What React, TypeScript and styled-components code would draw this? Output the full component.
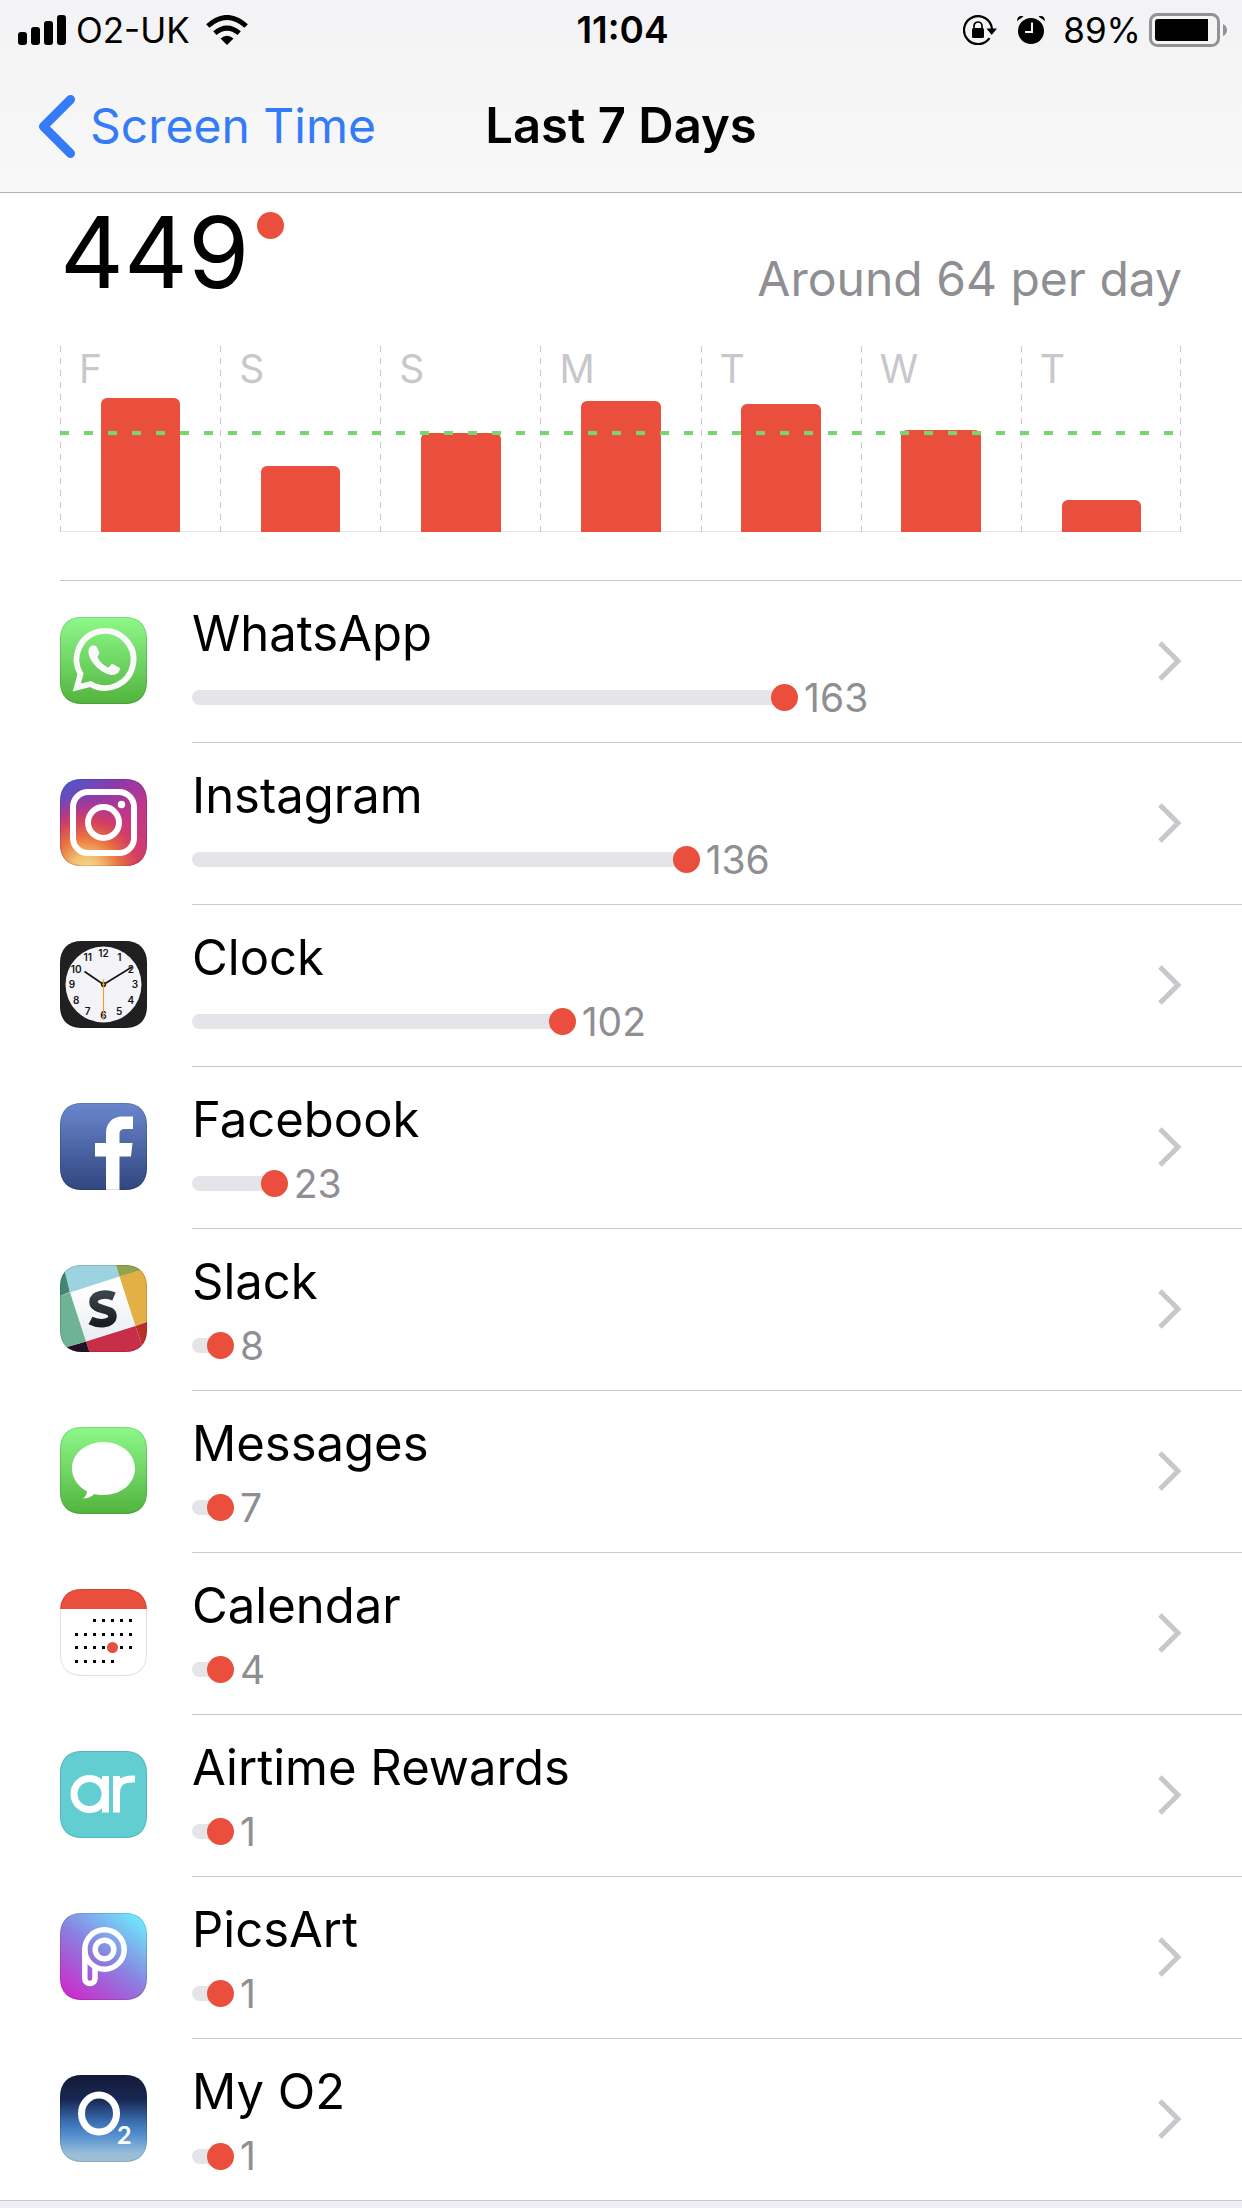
import React from "react";
import styled, { createGlobalStyle } from "styled-components";

const Global = createGlobalStyle`
  * { box-sizing: border-box; }
  body { margin: 0; background: #efeff4; font-family: Inter, "Liberation Sans", sans-serif; color: #000; }
`;

const red = "#ea4f3d";
const hairline = "#c8c7cc";
const blue = "#347bf7";

const Page = styled.div`
  background: #fff;
  border-bottom: 1px solid ${hairline};
`;

const Header = styled.header`
  background: linear-gradient(#f3f3f5, #f8f8f8);
  border-bottom: 1px solid #b2b2b2;
`;

const ThreeColumns = styled.div`
  display: grid;
  grid-template-columns: 1fr auto 1fr;
  align-items: center;
`;

const StatusBar = styled(ThreeColumns)`
  height: 60px;
  padding: 0 15px 0 18px;
  font-size: 35px;
  line-height: 36px;
`;

const StatusLeft = styled.div`
  display: flex;
  align-items: center;
  gap: 10px;
`;

const Carrier = styled.span`
  padding-right: 6px;
`;

const StatusRight = styled(StatusLeft)`
  justify-content: flex-end;
  gap: 8px;
`;

const StatusIcons = styled.div`
  display: flex;
  gap: 20px;
  padding-right: 10px;
`;

const Clock = styled.time`
  font-size: 37px;
  font-weight: 600;
`;

const NavBar = styled(ThreeColumns)`
  height: 132px;
  padding: 0 38px;
`;

const BackLink = styled.a`
  display: flex;
  align-items: center;
  gap: 14px;
  color: ${blue};
  font-size: 48px;
  line-height: 60px;
  text-decoration: none;
`;

const Title = styled.h1`
  margin: 0;
  font-size: 49px;
  line-height: 60px;
  font-weight: 600;
`;

const Summary = styled.section`
  padding: 8px 60px 0;
`;

const Totals = styled.div`
  display: flex;
  justify-content: space-between;
  align-items: flex-start;
`;

const Total = styled.div`
  display: flex;
  align-items: flex-start;
  gap: 8px;
  font-size: 99px;
  line-height: 102px;
`;

const Dot = styled.span`
  flex: none;
  width: 27px;
  height: 27px;
  border-radius: 50%;
  background: ${red};
`;

const TotalDot = styled(Dot)`
  margin-top: 11px;
`;

const Average = styled.p`
  margin: 48px 0 0;
  color: #8e8e93;
  font-size: 48px;
  line-height: 60px;
`;

const Chart = styled.div`
  position: relative;
  display: grid;
  grid-template-columns: repeat(7, 1fr);
  height: 186px;
  margin-top: 37px;
  padding-right: 1px;
  border-bottom: 1px solid #e5e5ea;
`;

const dashes = `repeating-linear-gradient(#c7c7cc 0 6px, transparent 6px 12px)`;

const Day = styled.div`
  display: flex;
  flex-direction: column;
  justify-content: space-between;
  height: 186px;
  padding-left: 1px;
  background: ${dashes} left / 1px 100% no-repeat;

  &:last-of-type {
    background: ${dashes} left / 1px 100% no-repeat, ${dashes} right / 1px 100% no-repeat;
  }
`;

const DayLabel = styled.span`
  height: 0;
  padding-left: 18px;
  color: #c7c7cc;
  font-size: 39px;
  line-height: 46px;
`;

const Bar = styled.div`
  width: 50%;
  margin: 0 auto;
  border-radius: 6px 6px 0 0;
  background: ${red};
`;

const AverageLine = styled.span`
  position: absolute;
  left: 0;
  right: 0;
  top: 85px;
  height: 4px;
  background: repeating-linear-gradient(90deg, #76d672 0 9px, transparent 9px 24px);
`;

const List = styled.ul`
  list-style: none;
  margin: 48px 0 -1px 60px;
  padding: 0;
  border-top: 1px solid ${hairline};
`;

const Row = styled.li`
  &:not(:last-child) > a > div {
    border-bottom: 1px solid ${hairline};
  }
`;

const RowLink = styled.a`
  display: flex;
  align-items: center;
  gap: 45px;
  color: inherit;
  text-decoration: none;

  > svg {
    margin-bottom: 3px;
  }
`;

const RowBody = styled.div`
  flex: 1;
  display: flex;
  align-items: center;
  gap: 20px;
  height: 162px;
  padding: 0 60px 2px 0;
`;

const Details = styled.div`
  flex: 1;
  min-width: 0;
  padding-top: 3px;
`;

const AppName = styled.div`
  font-size: 49px;
  line-height: 60px;
`;

const Usage = styled.div`
  display: flex;
  align-items: center;
  gap: 6px;
  margin-top: 11px;
  color: #8e8e93;
  font-size: 39px;
  line-height: 46px;
`;

const Track = styled.div`
  flex: none;
  display: flex;
  align-items: center;
  min-width: 42px;
`;

const Rail = styled.span`
  flex: 1;
  height: 15px;
  margin-right: -13px;
  border-radius: 8px 0 0 8px;
  background: #e4e4e9;
`;

const IconSvg = styled.svg`
  flex: none;
  display: block;
`;

function Tile({ id, fill, children }: { id: string; fill: string; children: React.ReactNode }) {
  return (
    <IconSvg width="87" height="87" viewBox="0 0 87 87" aria-hidden="true">
      <defs>
        <clipPath id={`${id}-clip`}>
          <path d="M22 0H65C79 0 87 8 87 22V65C87 79 79 87 65 87H22C8 87 0 79 0 65V22C0 8 8 0 22 0Z" />
        </clipPath>
      </defs>
      <g clipPath={`url(#${id}-clip)`}>
        <rect width="87" height="87" fill={fill} />
        {children}
        <path
          d="M22 0H65C79 0 87 8 87 22V65C87 79 79 87 65 87H22C8 87 0 79 0 65V22C0 8 8 0 22 0Z"
          fill="none"
          stroke="#000"
          strokeOpacity="0.12"
          strokeWidth="2"
        />
      </g>
    </IconSvg>
  );
}

const greenStops = (
  <>
    <stop offset="0" stopColor="#8ef88a" />
    <stop offset="1" stopColor="#52b43e" />
  </>
);

const WhatsAppIcon = () => (
  <Tile id="wa" fill="url(#wa-g)">
    <linearGradient id="wa-g" x2="0" y2="1">{greenStops}</linearGradient>
    <path d="M16.800 70.500L20.500 57A28.500 28.500 0 1 1 30.500 67Z" fill="none" stroke="#fafafa" strokeWidth="5.800" />
    <path
      d="M33 28.500C30 28 28 32 28.500 36C30 46 42 57 52 58C57 58 60 55 60 51L52 46.500L48.500 50.500C44 49 39 44 37.500 40L39.500 36L36.500 29.500C36 28.500 34 28.500 33 28.500Z"
      fill="#fafafa"
    />
  </Tile>
);

const InstagramIcon = () => (
  <Tile id="ig" fill="url(#ig-a)">
    <linearGradient id="ig-a" x1="0.100" y1="0" x2="0.700" y2="1">
      <stop offset="0" stopColor="#4a58cf" />
      <stop offset="0.300" stopColor="#8f3aa8" />
      <stop offset="0.600" stopColor="#c0378a" />
      <stop offset="1" stopColor="#cf3d70" />
    </linearGradient>
    <radialGradient id="ig-b" cx="0.300" cy="1.050" r="0.850">
      <stop offset="0" stopColor="#f8dc8a" />
      <stop offset="0.200" stopColor="#f3c070" />
      <stop offset="0.450" stopColor="#e9743f" />
      <stop offset="0.700" stopColor="#d63f5c" stopOpacity="0.850" />
      <stop offset="1" stopColor="#c0378a" stopOpacity="0" />
    </radialGradient>
    <rect width="87" height="87" fill="url(#ig-b)" />
    <rect x="13" y="13" width="61" height="61" rx="15" fill="none" stroke="#fff" strokeWidth="6" />
    <circle cx="43.500" cy="43.500" r="15.500" fill="none" stroke="#fff" strokeWidth="6" />
    <circle cx="61.500" cy="25.500" r="3.700" fill="#fff" />
  </Tile>
);

const ClockIcon = () => (
  <Tile id="ck" fill="#202020">
    <circle cx="43.500" cy="43.500" r="38" fill="#f4f4f8" />
    <g fontSize="10" fontWeight="600" textAnchor="middle" fill="#151515">
      {Array.from({ length: 12 }, (_, i) => {
        const angle = ((i + 1) * Math.PI) / 6;
        return (
          <text key={i} x={43.5 + 31.5 * Math.sin(angle)} y={47 - 31 * Math.cos(angle)}>
            {i + 1}
          </text>
        );
      })}
    </g>
    <path d="M24.500 30.500L43.500 43.500L72 26" fill="none" stroke="#151515" strokeWidth="1.700" />
    <circle cx="43.500" cy="43.500" r="2.600" fill="#151515" />
    <path d="M43.500 38.500V79" stroke="#f09a2e" strokeWidth="1.100" />
    <circle cx="43.500" cy="43.500" r="1.300" fill="#f09a2e" />
  </Tile>
);

const FacebookIcon = () => (
  <Tile id="fb" fill="url(#fb-g)">
    <linearGradient id="fb-g" x2="0" y2="1">
      <stop offset="0" stopColor="#6a86cd" />
      <stop offset="1" stopColor="#30467f" />
    </linearGradient>
    <path d="M46 87V53.500H35V40H46V30C46 20 53 13.500 62 13.500H73V26H65C61 26 59.500 28 59.500 31V40H72.500L71 53.500H59.500V87Z" fill="#fff" />
  </Tile>
);

const SlackIcon = () => (
  <Tile id="sl" fill="#fff">
    <linearGradient id="sl-g" x2="0" y2="1">
      <stop offset="0.200" stopColor="#fff" />
      <stop offset="1" stopColor="#e8edf2" />
    </linearGradient>
    <linearGradient id="sl-s" x2="0" y2="1">
      <stop offset="0" stopColor="#3c424b" />
      <stop offset="1" stopColor="#1b1f24" />
    </linearGradient>
    <path d="M10 27L59 11L76 60L26 76Z" fill="url(#sl-g)" />
    <path d="M0 0H4L10 27L0 31Z" fill="#438770" />
    <path d="M3 0H56L59.500 11.500L10 27.500Z" fill="#9dd2df" />
    <path d="M56 0H87V4L59.500 11.500Z" fill="#93a24f" />
    <path d="M59.500 11.500L87 3V57L75.500 61Z" fill="#e3b046" />
    <path d="M75.500 61L87 57V87H84Z" fill="#b73029" />
    <path d="M26 76.500L75.500 61L84 87H29.500Z" fill="#c72f49" />
    <path d="M0 84L26 76.500L29.500 87H0Z" fill="#241126" />
    <path d="M0 31L10 27.500L26 76.500L0 84Z" fill="#6eb394" />
    <path
      d="M54 31.500C47 28.500 33.500 28.500 33.500 37C33.500 46 52.500 42.500 52.500 51C52.500 59.500 38 59.500 30.500 55.500"
      fill="none"
      stroke="url(#sl-s)"
      strokeWidth="8.500"
      strokeLinejoin="round"
    />
  </Tile>
);

const MessagesIcon = () => (
  <Tile id="ms" fill="url(#ms-g)">
    <linearGradient id="ms-g" x2="0" y2="1">{greenStops}</linearGradient>
    <path
      d="M43.500 15C61 15 75 26.500 75 41.500C75 56.500 61 68 43.500 68C40 68 37 67.600 34.500 67C31 70 27 71.500 23 71.500C25.500 69.500 27 67 27 64.500C18 59.500 12 51 12 41.500C12 26.500 26 15 43.500 15Z"
      fill="#fff"
    />
  </Tile>
);

const calendarWeeks = [
  { y: 30, from: 2, to: 6 },
  { y: 44, from: 0, to: 6 },
  { y: 57, from: 0, to: 6 },
  { y: 71, from: 0, to: 4 },
];

const CalendarIcon = () => (
  <Tile id="cl" fill="#fff">
    <rect width="87" height="20" fill={red} />
    {calendarWeeks.map(({ y, from, to }) =>
      Array.from({ length: to - from + 1 }, (_, i) => (
        <rect key={`${y}-${i}`} x={15 + (from + i) * 9} y={y} width="3" height="3" />
      )),
    )}
    <circle cx="52.500" cy="58.500" r="5.500" fill={red} />
  </Tile>
);

const AirtimeIcon = () => (
  <Tile id="ar" fill="#63ced1">
    <g fill="none" stroke="#fff" strokeWidth="7">
      <circle cx="29.500" cy="43" r="15.500" />
      <path d="M45.500 25V61.500M56.500 25V61.500M56.500 42C56.500 32 62 27.500 75 28" />
    </g>
  </Tile>
);

const PicsArtIcon = () => (
  <Tile id="pa" fill="url(#pa-g)">
    <linearGradient id="pa-g" x1="0.150" y1="0.950" x2="0.850" y2="0.050">
      <stop offset="0" stopColor="#c830cc" />
      <stop offset="0.500" stopColor="#8a80e0" />
      <stop offset="1" stopColor="#70e2fb" />
    </linearGradient>
    <g fill="none" stroke="#fff" strokeWidth="5.500">
      <circle cx="44.500" cy="36.500" r="19.700" />
      <circle cx="44.500" cy="36.500" r="9.300" />
      <path d="M24.800 36V65.500A5 5 0 0 0 35 65.500V54" />
    </g>
  </Tile>
);

const O2Icon = () => (
  <Tile id="o2" fill="url(#o2-g)">
    <linearGradient id="o2-g" x2="0" y2="1">
      <stop offset="0" stopColor="#141a38" />
      <stop offset="0.280" stopColor="#172752" />
      <stop offset="0.550" stopColor="#3c72b5" />
      <stop offset="0.700" stopColor="#5590cf" />
      <stop offset="0.900" stopColor="#98bdd9" />
      <stop offset="1" stopColor="#9fc1d8" />
    </linearGradient>
    <ellipse cx="39" cy="38.500" rx="17.500" ry="18.500" fill="none" stroke="#fff" strokeWidth="7" />
    <text x="57" y="69" fontSize="25" fontWeight="700" fontFamily="Lato, sans-serif" fill="#fff">2</text>
  </Tile>
);

const SignalIcon = () => (
  <IconSvg width="48" height="30" viewBox="0 0 48 30" role="img" aria-label="Signal strength">
    <rect x="0" y="17" width="9" height="13" rx="3" />
    <rect x="13" y="12" width="9" height="18" rx="3" />
    <rect x="26" y="6" width="9" height="24" rx="3" />
    <rect x="39" y="0" width="9" height="30" rx="3" />
  </IconSvg>
);

const WifiIcon = () => (
  <IconSvg width="42" height="30" viewBox="0 0 42 30" role="img" aria-label="Wi-Fi">
    <path d="M21 30L14.500 23.500Q21 18 27.500 23.500Z" />
    <g fill="none" stroke="#000" strokeWidth="5">
      <path d="M8.800 18.200Q21 8 33.200 18.200" />
      <path d="M1.800 11Q21 -6 40.200 11" />
    </g>
  </IconSvg>
);

const RotationLockIcon = () => (
  <IconSvg width="34" height="30" viewBox="0 0 34 30" role="img" aria-label="Rotation locked">
    <path d="M26.500 23.200A14 14 0 1 1 29 14" fill="none" stroke="#000" strokeWidth="2.200" />
    <path d="M23.500 13.500H34L28.700 20Z" />
    <rect x="9" y="13" width="12" height="10" rx="1.500" />
    <path d="M11 14V11A4 4 0 0 1 19 11V14" fill="none" stroke="#000" strokeWidth="1.700" />
  </IconSvg>
);

const AlarmIcon = () => (
  <IconSvg width="28" height="30" viewBox="0 0 28 30" role="img" aria-label="Alarm set">
    <circle cx="14" cy="16" r="13" />
    <path d="M0 6C0 2 3 0 6.500 1.500ZM28 6C28 2 25 0 21.500 1.500Z" />
    <path d="M15 7.500V17H8" fill="none" stroke="#f4f4f5" strokeWidth="2" />
  </IconSvg>
);

const BatteryIcon = () => (
  <IconSvg width="78" height="34" viewBox="0 0 78 34" role="img" aria-label="Battery">
    <rect x="1.500" y="1.500" width="68" height="31" rx="7" fill="none" stroke="#929294" strokeWidth="3" />
    <path d="M9 6H59V28H9Q6 28 6 25V9Q6 6 9 6Z" />
    <path d="M74 11Q78 13 78 17Q78 21 74 23Z" fill="#929294" />
  </IconSvg>
);

const BackIcon = () => (
  <IconSvg width="38" height="63" viewBox="0 0 38 63" aria-hidden="true">
    <path d="M32.500 4.500L5.500 31.500L32.500 58.500" fill="none" stroke={blue} strokeWidth="9" strokeLinecap="round" strokeLinejoin="round" />
  </IconSvg>
);

const Chevron = () => (
  <IconSvg width="24" height="40" viewBox="0 0 24 40" aria-hidden="true">
    <path d="M2 2L20 20L2 38" fill="none" stroke="#c7c7cc" strokeWidth="5" />
  </IconSvg>
);

const days = [
  { label: "F", height: 134 },
  { label: "S", height: 66 },
  { label: "S", height: 99 },
  { label: "M", height: 131 },
  { label: "T", height: 128 },
  { label: "W", height: 102 },
  { label: "T", height: 32 },
];

const apps = [
  { name: "WhatsApp", count: 163, Icon: WhatsAppIcon },
  { name: "Instagram", count: 136, Icon: InstagramIcon },
  { name: "Clock", count: 102, Icon: ClockIcon },
  { name: "Facebook", count: 23, Icon: FacebookIcon },
  { name: "Slack", count: 8, Icon: SlackIcon },
  { name: "Messages", count: 7, Icon: MessagesIcon },
  { name: "Calendar", count: 4, Icon: CalendarIcon },
  { name: "Airtime Rewards", count: 1, Icon: AirtimeIcon },
  { name: "PicsArt", count: 1, Icon: PicsArtIcon },
  { name: "My O2", count: 1, Icon: O2Icon },
];

const maxCount = 163;
const fullTrackPercent = 62.8;

export default function App() {
  return (
    <>
      <Global />
      <Page>
        <Header>
          <StatusBar>
            <StatusLeft>
              <SignalIcon />
              <Carrier>O2-UK</Carrier>
              <WifiIcon />
            </StatusLeft>
            <Clock>11:04</Clock>
            <StatusRight>
              <StatusIcons>
                <RotationLockIcon />
                <AlarmIcon />
              </StatusIcons>
              <span>89%</span>
              <BatteryIcon />
            </StatusRight>
          </StatusBar>
          <NavBar>
            <BackLink href="#screen-time">
              <BackIcon />
              Screen Time
            </BackLink>
            <Title>Last 7 Days</Title>
          </NavBar>
        </Header>
        <main>
          <Summary>
            <Totals>
              <Total>
                449
                <TotalDot />
              </Total>
              <Average>Around 64 per day</Average>
            </Totals>
            <Chart>
              {days.map(({ label, height }, i) => (
                <Day key={i}>
                  <DayLabel>{label}</DayLabel>
                  <Bar style={{ height }} />
                </Day>
              ))}
              <AverageLine />
            </Chart>
          </Summary>
          <List>
            {apps.map(({ name, count, Icon }) => (
              <Row key={name}>
                <RowLink href={`#${name}`}>
                  <Icon />
                  <RowBody>
                    <Details>
                      <AppName>{name}</AppName>
                      <Usage>
                        <Track style={{ width: `calc(12px + ${(count / maxCount) * fullTrackPercent}%)` }}>
                          <Rail />
                          <Dot />
                        </Track>
                        {count}
                      </Usage>
                    </Details>
                    <Chevron />
                  </RowBody>
                </RowLink>
              </Row>
            ))}
          </List>
        </main>
      </Page>
    </>
  );
}
